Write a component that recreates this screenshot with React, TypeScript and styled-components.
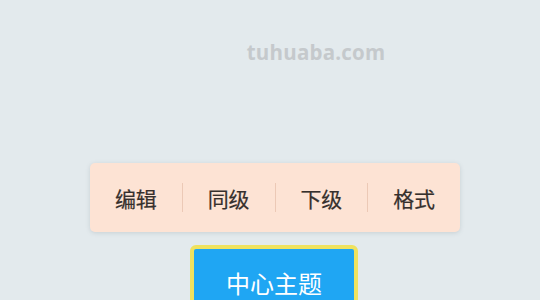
import React from "react";
import styled, { createGlobalStyle } from "styled-components";

const Global = createGlobalStyle`
  html, body { margin: 0; padding: 0; background: #e3eaed; }
  * { box-sizing: border-box; }
`;

const Page = styled.div`
  width: 540px;
  height: 300px;
  overflow: hidden;
  display: flex;
  flex-direction: column;
  align-items: center;
  background: #e3eaed;
  font-family: "Noto Sans CJK SC", "Noto Sans", sans-serif;
  & > * { flex-shrink: 0; }
`;

const Watermark = styled.div`
  margin-top: 37px;
  margin-left: 92px;
  font-family: "Open Sans", "DejaVu Sans", sans-serif;
  font-weight: 700;
  font-size: 20.5px;
  line-height: 30px;
  color: #c5c9cc;
  letter-spacing: 0.2px;
`;

const Toolbar = styled.div`
  margin-top: 96px;
  margin-left: 10px;
  width: 370px;
  height: 69px;
  display: flex;
  align-items: center;
  background: #fde3d4;
  border-radius: 5px;
  box-shadow: 0 1px 4px rgba(120, 130, 140, 0.25);
`;

const Item = styled.div`
  flex: 1;
  text-align: center;
  font-size: 21px;
  font-weight: 400;
  color: #36302d;
  line-height: 28px;
  -webkit-text-stroke: 0.2px #36302d;
`;

const Divider = styled.div`
  width: 1px;
  height: 29px;
  background: #ecc9b6;
`;

const Topic = styled.div`
  margin-top: 13px;
  margin-left: 8px;
  width: 168px;
  height: 70px;
  border: 4px solid #efe25e;
  border-radius: 6px;
  background: #1fa6f3;
  color: #ffffff;
  font-size: 24px;
  display: flex;
  justify-content: center;
  padding-top: 19px;
  line-height: 30px;
`;

const items = ["编辑", "同级", "下级", "格式"];

export default function App() {
  return (
    <Page>
      <Global />
      <Watermark>tuhuaba.com</Watermark>
      <Toolbar>
        {items.map((t, i) => (
          <React.Fragment key={t}>
            {i > 0 && <Divider />}
            <Item>{t}</Item>
          </React.Fragment>
        ))}
      </Toolbar>
      <Topic>中心主题</Topic>
    </Page>
  );
}
